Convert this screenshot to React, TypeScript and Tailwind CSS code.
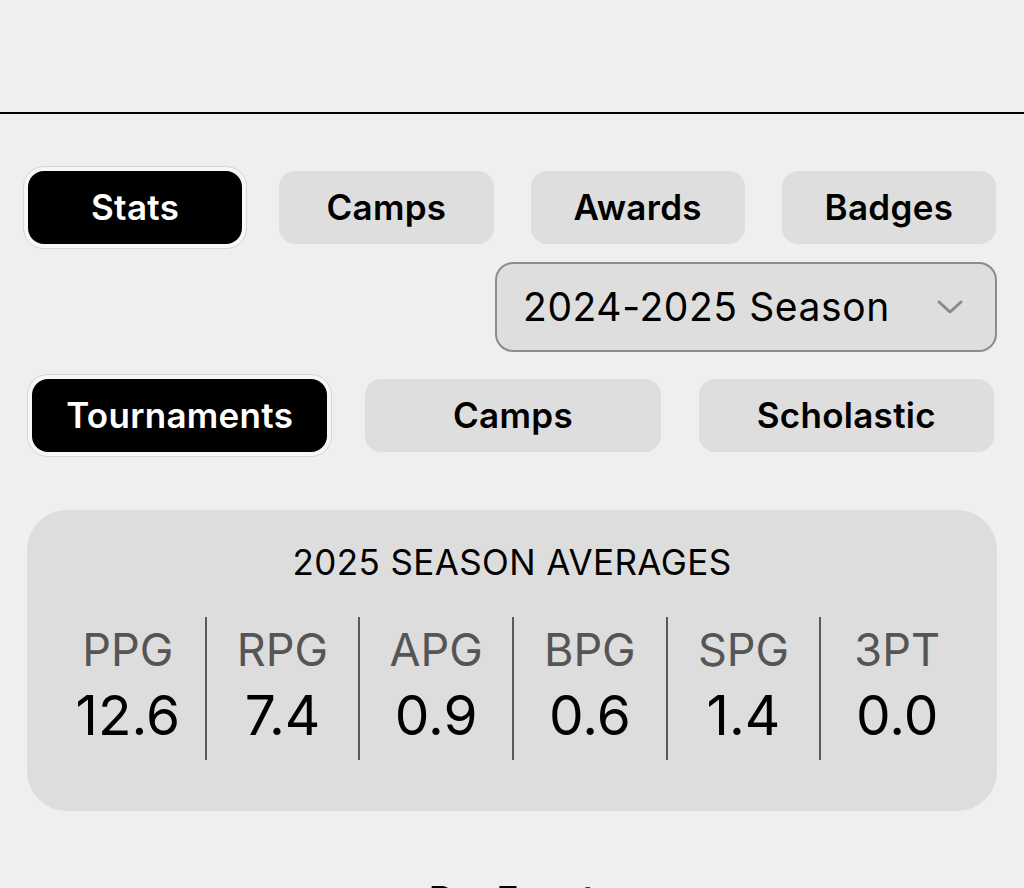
import { useState } from 'react'

const topTabs = ['Stats', 'Camps', 'Awards', 'Badges']
const subTabs = ['Tournaments', 'Camps', 'Scholastic']

const averages = [
  { label: 'PPG', value: '12.6' },
  { label: 'RPG', value: '7.4' },
  { label: 'APG', value: '0.9' },
  { label: 'BPG', value: '0.6' },
  { label: 'SPG', value: '1.4' },
  { label: '3PT', value: '0.0' },
]

function Pill({ label, active, onClick }: { label: string; active: boolean; onClick: () => void }) {
  return (
    <button
      onClick={onClick}
      className={
        active
          ? 'h-[73px] flex-1 rounded-[16px] bg-black text-white text-[35px] font-semibold tracking-[0.3px] shadow-[0_0_0_4px_#f7f7f7,0_0_0_5px_#d6d6d6]'
          : 'h-[73px] flex-1 rounded-[16px] bg-[#dedede] text-black text-[35px] font-semibold tracking-[0.3px]'
      }
    >
      {label}
    </button>
  )
}

function Chevron() {
  return (
    <svg width="26" height="16" viewBox="0 0 26 16" fill="none">
      <path d="M2 3l11 10L24 3" stroke="#8a8a8a" strokeWidth="3" strokeLinecap="round" strokeLinejoin="round" />
    </svg>
  )
}

export default function App() {
  const [tab, setTab] = useState('Stats')
  const [sub, setSub] = useState('Tournaments')

  return (
    <div className="min-h-[888px] bg-[#efefef] overflow-hidden font-['Inter','Liberation_Sans',sans-serif] text-black">
      <div className="h-[114px] border-b-2 border-black" />

      {/* main tabs */}
      <div className="mt-[57px] flex gap-[37px] pl-[28px] pr-[28px]">
        {topTabs.map((t) => (
          <Pill key={t} label={t} active={tab === t} onClick={() => setTab(t)} />
        ))}
      </div>

      {/* season picker */}
      <div className="mt-[18px] flex justify-end pr-[27px]">
        <button className="flex h-[90px] w-[502px] items-center justify-between rounded-[18px] border-2 border-[#8c8c8c] bg-[#dedede] pl-[26px] pr-[32px]">
          <span className="text-[39px] font-normal tracking-[0.6px]">2024-2025 Season</span>
          <Chevron />
        </button>
      </div>

      {/* event type tabs */}
      <div className="mt-[27px] flex gap-[38px] pl-[32px] pr-[30px]">
        {subTabs.map((t) => (
          <Pill key={t} label={t} active={sub === t} onClick={() => setSub(t)} />
        ))}
      </div>

      {/* season averages card */}
      <div className="mx-[27px] mt-[58px] h-[301px] rounded-[40px] bg-[#dddddd] px-[24px] pt-[32px]">
        <div className="h-[40px] text-center text-[35px] leading-[40px] tracking-[0.4px]">2025 SEASON AVERAGES</div>
        <div className="mt-[35px] grid h-[143px] grid-cols-6">
          {averages.map((s, i) => (
            <div
              key={s.label}
              className={
                i === 0
                  ? 'flex flex-col items-center pt-[5px]'
                  : 'flex flex-col items-center border-l-2 border-[#5a5a5a] pt-[5px]'
              }
            >
              <div className="h-[56px] text-[45px] leading-[56px] text-[#555555]">{s.label}</div>
              <div className="mt-[5px] h-[64px] text-[55px] leading-[64px]">{s.value}</div>
            </div>
          ))}
        </div>
      </div>

      <div className="mt-[68px] text-center text-[36px] font-semibold leading-[40px]">Per Event</div>
    </div>
  )
}
